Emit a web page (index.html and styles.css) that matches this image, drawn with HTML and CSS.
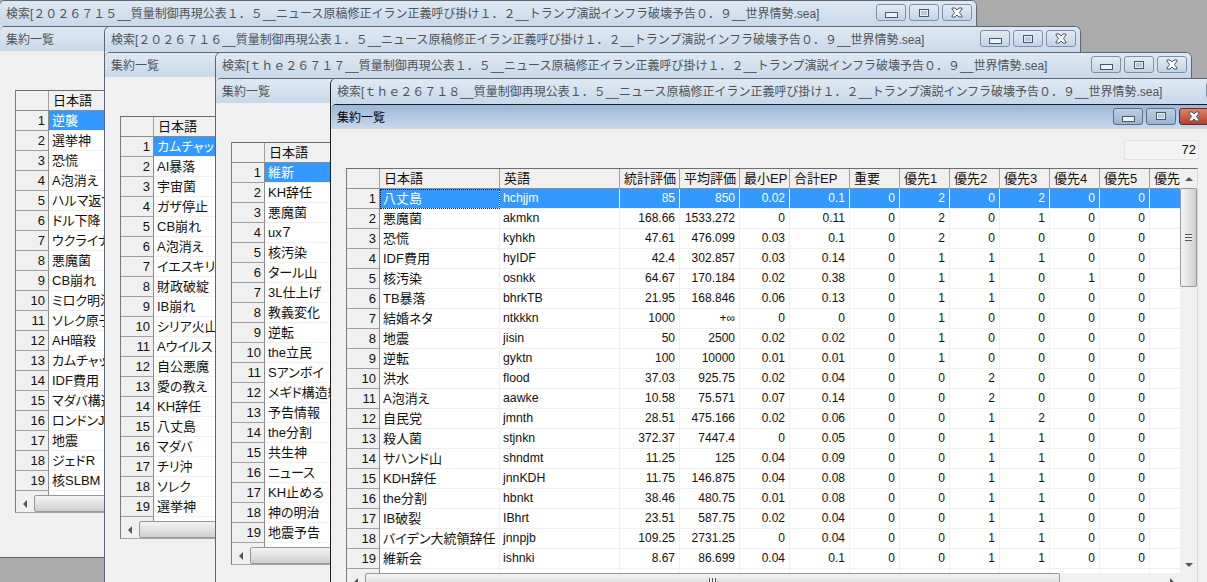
FILE: index.html
```html
<!DOCTYPE html>
<html lang="ja">

<head>
    <meta charset="UTF-8" />
    <title>集約一覧</title>
    <link rel="stylesheet" href="styles.css">
</head>

<body>
    <svg class="defs" width="0" height="0">
        <symbol id="x" viewBox="0 0 12 11">
            <path d="M1 1h3l2 2 2-2h3v1L8.500 5.500 11 9v1H8L6 8 4 10H1V9l2.500-3.500L1 2z" fill="#fff" stroke="#47586b" stroke-width="1" />
        </symbol>
        <symbol id="box" viewBox="0 0 10 8">
            <rect x="0.500" y="0.500" width="9" height="7" fill="#e6edf5" stroke="#47586b" />
            <rect x="2" y="2" width="6" height="4" fill="#b7c9dd" />
        </symbol>
    </svg>

    <div class="desk">
        <!-- 1 -->
        <div class="win w1">
            <div class="bar">
                <span>検索[２０２６７１５__質量制御再現公表１．５__ニュース原稿修正イラン正義呼び掛け１．２__トランプ演説インフラ破壊予告０．９__世界情勢.sea]</span>
                <div class="btns"><i class="btn min"></i><i class="btn max"><svg><use href="#box" /></svg></i><i class="btn cls"><svg><use href="#x" /></svg></i></div>
            </div>
            <div class="sub">
                <div class="bar subbar"><span>集約一覧</span></div>
                <div class="pane">
                    <div class="count"></div>
                    <div class="grid">
                        <div class="view">
                            <table class="names">
                                <tr><th></th><th>日本語</th></tr>
                                <tr><th>1</th><td class="sel">逆襲</td></tr>
                                <tr><th>2</th><td>選挙神</td></tr>
                                <tr><th>3</th><td>恐慌</td></tr>
                                <tr><th>4</th><td>A泡消え</td></tr>
                                <tr><th>5</th><td>ハルマ返す</td></tr>
                                <tr><th>6</th><td>ドル下降</td></tr>
                                <tr><th>7</th><td>ウクライナ侵攻</td></tr>
                                <tr><th>8</th><td>悪魔菌</td></tr>
                                <tr><th>9</th><td>CB崩れ</td></tr>
                                <tr><th>10</th><td>ミロク明治</td></tr>
                                <tr><th>11</th><td>ソレク原子力</td></tr>
                                <tr><th>12</th><td>AH暗殺</td></tr>
                                <tr><th>13</th><td>カムチャッカ</td></tr>
                                <tr><th>14</th><td>IDF費用</td></tr>
                                <tr><th>15</th><td>マダバ構造</td></tr>
                                <tr><th>16</th><td>ロンドンJ</td></tr>
                                <tr><th>17</th><td>地震</td></tr>
                                <tr><th>18</th><td>ジェドR</td></tr>
                                <tr><th>19</th><td>核SLBM</td></tr>
                                <tr><th></th><td></td></tr>
                            </table>
                        </div>
                        <div class="vs"></div>
                        <div class="hs"><b class="left"></b><b class="thumb"></b></div>
                    </div>
                </div>
            </div>
        </div>

        <!-- 2 -->
        <div class="win w2">
            <div class="bar">
                <span>検索[２０２６７１６__質量制御再現公表１．５__ニュース原稿修正イラン正義呼び掛け１．２__トランプ演説インフラ破壊予告０．９__世界情勢.sea]</span>
                <div class="btns"><i class="btn min"></i><i class="btn max"><svg><use href="#box" /></svg></i><i class="btn cls"><svg><use href="#x" /></svg></i></div>
            </div>
            <div class="sub">
                <div class="bar subbar"><span>集約一覧</span></div>
                <div class="pane">
                    <div class="count"></div>
                    <div class="grid">
                        <div class="view">
                            <table class="names">
                                <tr><th></th><th>日本語</th></tr>
                                <tr><th>1</th><td class="sel">カムチャッカ</td></tr>
                                <tr><th>2</th><td>AI暴落</td></tr>
                                <tr><th>3</th><td>宇宙菌</td></tr>
                                <tr><th>4</th><td>ガザ停止</td></tr>
                                <tr><th>5</th><td>CB崩れ</td></tr>
                                <tr><th>6</th><td>A泡消え</td></tr>
                                <tr><th>7</th><td>イエスキリスト</td></tr>
                                <tr><th>8</th><td>財政破綻</td></tr>
                                <tr><th>9</th><td>IB崩れ</td></tr>
                                <tr><th>10</th><td>シリア火山</td></tr>
                                <tr><th>11</th><td>Aウイルス</td></tr>
                                <tr><th>12</th><td>自公悪魔</td></tr>
                                <tr><th>13</th><td>愛の教え</td></tr>
                                <tr><th>14</th><td>KH辞任</td></tr>
                                <tr><th>15</th><td>八丈島</td></tr>
                                <tr><th>16</th><td>マダバ</td></tr>
                                <tr><th>17</th><td>チリ沖</td></tr>
                                <tr><th>18</th><td>ソレク</td></tr>
                                <tr><th>19</th><td>選挙神</td></tr>
                                <tr><th></th><td></td></tr>
                            </table>
                        </div>
                        <div class="vs"></div>
                        <div class="hs"><b class="left"></b><b class="thumb"></b></div>
                    </div>
                </div>
            </div>
        </div>

        <!-- 3 -->
        <div class="win w3">
            <div class="bar">
                <span>検索[ｔｈｅ２６７１７__質量制御再現公表１．５__ニュース原稿修正イラン正義呼び掛け１．２__トランプ演説インフラ破壊予告０．９__世界情勢.sea]</span>
                <div class="btns"><i class="btn min"></i><i class="btn max"><svg><use href="#box" /></svg></i><i class="btn cls"><svg><use href="#x" /></svg></i></div>
            </div>
            <div class="sub">
                <div class="bar subbar"><span>集約一覧</span></div>
                <div class="pane">
                    <div class="count"></div>
                    <div class="grid">
                        <div class="view">
                            <table class="names">
                                <tr><th></th><th>日本語</th></tr>
                                <tr><th>1</th><td class="sel">維新</td></tr>
                                <tr><th>2</th><td>KH辞任</td></tr>
                                <tr><th>3</th><td>悪魔菌</td></tr>
                                <tr><th>4</th><td>ux７</td></tr>
                                <tr><th>5</th><td>核汚染</td></tr>
                                <tr><th>6</th><td>タール山</td></tr>
                                <tr><th>7</th><td>3L仕上げ</td></tr>
                                <tr><th>8</th><td>教義変化</td></tr>
                                <tr><th>9</th><td>逆転</td></tr>
                                <tr><th>10</th><td>the立民</td></tr>
                                <tr><th>11</th><td>Sアンボイ</td></tr>
                                <tr><th>12</th><td>メギド構造線</td></tr>
                                <tr><th>13</th><td>予告情報</td></tr>
                                <tr><th>14</th><td>the分割</td></tr>
                                <tr><th>15</th><td>共生神</td></tr>
                                <tr><th>16</th><td>ニュース</td></tr>
                                <tr><th>17</th><td>KH止める</td></tr>
                                <tr><th>18</th><td>神の明治</td></tr>
                                <tr><th>19</th><td>地震予告</td></tr>
                                <tr><th></th><td></td></tr>
                            </table>
                        </div>
                        <div class="vs"></div>
                        <div class="hs"><b class="left"></b><b class="thumb"></b></div>
                    </div>
                </div>
            </div>
        </div>

        <!-- 4 手前のウィンドウ -->
        <div class="win w4">
            <div class="bar">
                <span>検索[ｔｈｅ２６７１８__質量制御再現公表１．５__ニュース原稿修正イラン正義呼び掛け１．２__トランプ演説インフラ破壊予告０．９__世界情勢.sea]</span>
                <div class="btns"><i class="btn min"></i><i class="btn max"><svg><use href="#box" /></svg></i><i class="btn cls"><svg><use href="#x" /></svg></i></div>
            </div>
            <div class="sub active">
                <div class="bar subbar">
                    <span>集約一覧</span>
                    <div class="btns"><i class="btn min"></i><i class="btn max"><svg><use href="#box" /></svg></i><i class="btn cls"><svg><use href="#x" /></svg></i></div>
                </div>
                <div class="pane">
                    <div class="count">72</div>
                    <div class="grid">
                        <div class="view">
                            <table class="data">
                                <colgroup>
                                    <col class="c33"><col class="c120"><col class="c120"><col class="c60"><col class="c60"><col class="c50"><col class="c60"><col class="c50"><col class="c50"><col class="c50"><col class="c50"><col class="c50"><col class="c50"><col class="c50">
                                </colgroup>
                                <tr class="head"><th></th><th>日本語</th><th>英語</th><th>統計評価</th><th>平均評価</th><th>最小EP</th><th>合計EP</th><th>重要</th><th>優先1</th><th>優先2</th><th>優先3</th><th>優先4</th><th>優先5</th><th>優先</th></tr>
                                <tr class="sel"><th>1</th><td class="focus">八丈島</td><td>hchjjm</td><td>85</td><td>850</td><td>0.02</td><td>0.1</td><td>0</td><td>2</td><td>0</td><td>2</td><td>0</td><td>0</td><td></td></tr>
                                <tr><th>2</th><td>悪魔菌</td><td>akmkn</td><td>168.66</td><td>1533.272</td><td>0</td><td>0.11</td><td>0</td><td>2</td><td>0</td><td>1</td><td>0</td><td>0</td><td></td></tr>
                                <tr><th>3</th><td>恐慌</td><td>kyhkh</td><td>47.61</td><td>476.099</td><td>0.03</td><td>0.1</td><td>0</td><td>2</td><td>0</td><td>0</td><td>0</td><td>0</td><td></td></tr>
                                <tr><th>4</th><td>IDF費用</td><td>hyIDF</td><td>42.4</td><td>302.857</td><td>0.03</td><td>0.14</td><td>0</td><td>1</td><td>1</td><td>1</td><td>0</td><td>0</td><td></td></tr>
                                <tr><th>5</th><td>核汚染</td><td>osnkk</td><td>64.67</td><td>170.184</td><td>0.02</td><td>0.38</td><td>0</td><td>1</td><td>1</td><td>0</td><td>1</td><td>0</td><td></td></tr>
                                <tr><th>6</th><td>TB暴落</td><td>bhrkTB</td><td>21.95</td><td>168.846</td><td>0.06</td><td>0.13</td><td>0</td><td>1</td><td>1</td><td>0</td><td>0</td><td>0</td><td></td></tr>
                                <tr><th>7</th><td>結婚ネタ</td><td>ntkkkn</td><td>1000</td><td>+∞</td><td>0</td><td>0</td><td>0</td><td>1</td><td>0</td><td>0</td><td>0</td><td>0</td><td></td></tr>
                                <tr><th>8</th><td>地震</td><td>jisin</td><td>50</td><td>2500</td><td>0.02</td><td>0.02</td><td>0</td><td>1</td><td>0</td><td>0</td><td>0</td><td>0</td><td></td></tr>
                                <tr><th>9</th><td>逆転</td><td>gyktn</td><td>100</td><td>10000</td><td>0.01</td><td>0.01</td><td>0</td><td>1</td><td>0</td><td>0</td><td>0</td><td>0</td><td></td></tr>
                                <tr><th>10</th><td>洪水</td><td>flood</td><td>37.03</td><td>925.75</td><td>0.02</td><td>0.04</td><td>0</td><td>0</td><td>2</td><td>0</td><td>0</td><td>0</td><td></td></tr>
                                <tr><th>11</th><td>A泡消え</td><td>aawke</td><td>10.58</td><td>75.571</td><td>0.07</td><td>0.14</td><td>0</td><td>0</td><td>2</td><td>0</td><td>0</td><td>0</td><td></td></tr>
                                <tr><th>12</th><td>自民党</td><td>jmnth</td><td>28.51</td><td>475.166</td><td>0.02</td><td>0.06</td><td>0</td><td>0</td><td>1</td><td>2</td><td>0</td><td>0</td><td></td></tr>
                                <tr><th>13</th><td>殺人菌</td><td>stjnkn</td><td>372.37</td><td>7447.4</td><td>0</td><td>0.05</td><td>0</td><td>0</td><td>1</td><td>1</td><td>0</td><td>0</td><td></td></tr>
                                <tr><th>14</th><td>サハンド山</td><td>shndmt</td><td>11.25</td><td>125</td><td>0.04</td><td>0.09</td><td>0</td><td>0</td><td>1</td><td>1</td><td>0</td><td>0</td><td></td></tr>
                                <tr><th>15</th><td>KDH辞任</td><td>jnnKDH</td><td>11.75</td><td>146.875</td><td>0.04</td><td>0.08</td><td>0</td><td>0</td><td>1</td><td>1</td><td>0</td><td>0</td><td></td></tr>
                                <tr><th>16</th><td>the分割</td><td>hbnkt</td><td>38.46</td><td>480.75</td><td>0.01</td><td>0.08</td><td>0</td><td>0</td><td>1</td><td>1</td><td>0</td><td>0</td><td></td></tr>
                                <tr><th>17</th><td>IB破裂</td><td>IBhrt</td><td>23.51</td><td>587.75</td><td>0.02</td><td>0.04</td><td>0</td><td>0</td><td>1</td><td>1</td><td>0</td><td>0</td><td></td></tr>
                                <tr><th>18</th><td>バイデン大統領辞任</td><td>jnnpjb</td><td>109.25</td><td>2731.25</td><td>0</td><td>0.04</td><td>0</td><td>0</td><td>1</td><td>1</td><td>0</td><td>0</td><td></td></tr>
                                <tr><th>19</th><td>維新会</td><td>ishnki</td><td>8.67</td><td>86.699</td><td>0.04</td><td>0.1</td><td>0</td><td>0</td><td>1</td><td>1</td><td>0</td><td>0</td><td></td></tr>
                                <tr><th></th><td></td><td></td><td></td><td></td><td></td><td></td><td></td><td></td><td></td><td></td><td></td><td></td><td></td></tr>
                            </table>
                        </div>
                        <div class="vs">
                            <b class="up"></b>
                            <b class="thumb"></b>
                            <b class="down"></b>
                        </div>
                        <div class="hs"><b class="left"></b><b class="thumb"></b><b class="right"></b></div>
                    </div>
                </div>
            </div>
        </div>
    </div>
</body>

</html>
```

FILE: styles.css
```css
* {
    margin: 0;
    padding: 0;
    box-sizing: border-box;
}

body {
    font: 12px "Liberation Sans", "Noto Sans CJK JP", sans-serif;
    background: #ababab;
}

.defs {
    display: block;
}

.desk {
    position: relative;
    width: 1207px;
    height: 582px;
    overflow: hidden;
    background: #ababab;
}

/* windows on the desktop */
.win {
    position: absolute;
    width: 977px;
    height: 640px;
    display: flex;
    flex-direction: column;
    border: 1px solid #5b6775;
    border-bottom: none;
    border-radius: 6px 6px 0 0;
    background: #f0f0f0;
}

.w1 {
    left: -1px;
    top: 0;
    width: 978px;
    height: 558px;
    border-bottom: 1px solid #5b6775;
}

.w2 {
    left: 104px;
    top: 26px;
}

.w3 {
    left: 215px;
    top: 52px;
}

.w4 {
    left: 330px;
    top: 78px;
    border-left-color: #1d1d1d;
}

.bar {
    height: 25px;
    flex: none;
    display: flex;
    align-items: center;
    justify-content: space-between;
    padding: 0 4px 2px 6px;
    color: #4e5359;
    white-space: nowrap;
    background: linear-gradient(#dfe9f4, #c8d8ea);
    border-radius: 5px 5px 0 0;
}

.btns {
    display: flex;
    gap: 3px;
    flex: none;
}

.btn {
    width: 30px;
    height: 17px;
    display: flex;
    align-items: center;
    justify-content: center;
    border: 1px solid #7f90a4;
    border-radius: 3px;
    background: linear-gradient(#e3ecf5, #c3d3e5);
}

.min::before {
    content: "";
    flex: none;
    width: 11px;
    height: 4px;
    margin-top: 5px;
    background: #eef3f8;
    border: 1px solid #47586b;
}

.max svg {
    width: 10px;
    height: 8px;
}

.cls svg {
    width: 12px;
    height: 11px;
}

/* child window */
.sub {
    flex: 1;
    display: flex;
    flex-direction: column;
    width: 884px;
    border-top: 1px solid #5b6775;
    border-radius: 5px 5px 0 0;
    background: #f0f0f0;
}

.subbar {
    height: 24px;
    padding-left: 6px;
    padding-right: 6px;
}

.active {
    border-top-color: #1d1d1d;
}

.active .subbar {
    color: #000;
    background: linear-gradient(#9ab8d8, #c9d9ea);
}

.active .btn {
    background: linear-gradient(#bdd0e4, #97b4d2);
    border-color: #5b6e84;
}

.active .cls {
    background: linear-gradient(#e0836f, #b63f2c);
    border-color: #6b2a20;
}

.active .cls path {
    stroke: #6b2a20;
}

.pane {
    flex: 1;
    padding: 11px 16px 0 15px;
    display: flex;
    flex-direction: column;
    align-items: flex-end;
}

.count {
    width: 75px;
    height: 20px;
    line-height: 18px;
    padding-right: 2px;
    margin-bottom: 8px;
    text-align: right;
    font-size: 13px;
    border: 1px solid #e2e2e2;
    border-radius: 2px;
    background: #f4f4f4;
    color: #111;
}

.win:not(.w4) .count {
    visibility: hidden;
}

/* table + scrollbars */
.grid {
    width: 852px;
    height: 423px;
    flex: none;
    align-self: flex-start;
    display: grid;
    grid-template-columns: 833px 17px;
    grid-template-rows: 404px 17px;
    border: 1px solid #a6a6a6;
    border-top-color: #6e6e6e;
    border-left-color: #7a7a7a;
    border-right-color: #d9d9d9;
    background: #f0f0f0;
}

.view {
    overflow: hidden;
    background: #fff;
}

table {
    border-collapse: separate;
    border-spacing: 0;
    table-layout: fixed;
    font-family: "Liberation Sans", "Noto Sans CJK JP", sans-serif;
    font-size: 13px;
    font-feature-settings: "palt";
    color: #111;
}

.names {
    width: 153px;
}

.names th:first-child {
    width: 33px;
}

.data {
    width: 853px;
}

.c33 {
    width: 33px;
}

.c120 {
    width: 120px;
}

.c60 {
    width: 60px;
}

.c50 {
    width: 50px;
}

tr {
    height: 20px;
}

th,
td {
    height: 20px;
    line-height: 19px;
    overflow: hidden;
    white-space: nowrap;
}

th {
    font-weight: normal;
    text-align: right;
    padding-right: 3px;
    background: #f0f0f0;
    border-right: 1px solid #8c8c8c;
    border-bottom: 1px solid #a0a0a0;
}

tr:first-child th {
    text-align: left;
    padding: 0 0 0 4px;
    border-right-color: #a0a0a0;
    border-bottom-color: #8c8c8c;
}

td {
    padding: 0 4px 0 3px;
    text-align: right;
    font-size: 12px;
    border-right: 1px solid #f0f0f0;
    border-bottom: 1px solid #f0f0f0;
}

.names td,
.data td:nth-child(2) {
    text-align: left;
    font-size: 13px;
}

.data td:nth-child(3) {
    text-align: left;
    font-size: 12.3px;
}

td.sel,
tr.sel td {
    background: #3399ff;
    color: #fff;
}

tr.sel td {
    border-right-color: #fff;
}

td.focus {
    outline: 1px dotted #10213a;
    outline-offset: -1px;
}

.vs {
    display: flex;
    flex-direction: column;
    align-items: stretch;
}

.hs {
    display: flex;
    align-items: stretch;
    grid-column: 1;
}

.vs b,
.hs b {
    display: flex;
    align-items: center;
    justify-content: center;
    flex: none;
}

.up {
    height: 19px;
}

.down {
    height: 17px;
    margin-top: auto;
}

.left {
    width: 18px;
}

.right {
    width: 17px;
    margin-left: auto;
}

.up::before,
.down::before,
.left::before,
.right::before {
    content: "";
    border: 4px solid transparent;
}

.up::before {
    border-bottom-color: #555;
    border-top-width: 0;
}

.down::before {
    border-top-color: #555;
    border-bottom-width: 0;
}

.left::before {
    border-right-color: #555;
    border-left-width: 0;
}

.right::before {
    border-left-color: #555;
    border-right-width: 0;
}

.thumb {
    border: 1px solid #979797;
    border-radius: 2px;
}

.vs .thumb {
    height: 99px;
    background: linear-gradient(90deg, #f4f4f4, #cfcfcf);
}

.vs .thumb::after {
    content: "";
    width: 7px;
    height: 7px;
    background: repeating-linear-gradient(#555 0 1px, #eee 1px 3px);
}

.hs .thumb {
    width: 695px;
    background: linear-gradient(#f4f4f4, #cfcfcf);
}

.hs .thumb::after {
    content: "";
    width: 7px;
    height: 7px;
    background: repeating-linear-gradient(90deg, #555 0 1px, #eee 1px 3px);
}
```
